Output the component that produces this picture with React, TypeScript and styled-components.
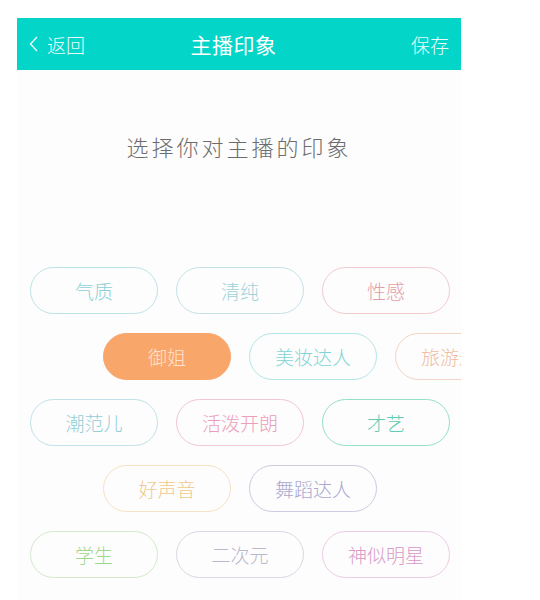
import styled, { createGlobalStyle } from 'styled-components';

type Tag = {
  label: string;
  border: string;
  color: string;
  active?: boolean;
};

const rows: { shifted: boolean; tags: Tag[] }[] = [
  {
    shifted: false,
    tags: [
      { label: '气质', border: '#bde3e6', color: '#8ccfd6' },
      { label: '清纯', border: '#c3e2e6', color: '#9fd3da' },
      { label: '性感', border: '#f1cbd0', color: '#e49dab' },
    ],
  },
  {
    shifted: true,
    tags: [
      { label: '御姐', border: '#f9a66b', color: '#fde2cc', active: true },
      { label: '美妆达人', border: '#b2e6e6', color: '#7fd5d6' },
      { label: '旅游达人', border: '#f3d3c4', color: '#efbda3' },
    ],
  },
  {
    shifted: false,
    tags: [
      { label: '潮范儿', border: '#c0e2e8', color: '#93cdd6' },
      { label: '活泼开朗', border: '#f1c6d5', color: '#eb9dba' },
      { label: '才艺', border: '#93e0ca', color: '#5fcdb0' },
    ],
  },
  {
    shifted: true,
    tags: [
      { label: '好声音', border: '#f5e3c3', color: '#efc98c' },
      { label: '舞蹈达人', border: '#cccbe0', color: '#a9a8cf' },
    ],
  },
  {
    shifted: false,
    tags: [
      { label: '学生', border: '#d2e9cb', color: '#a0d78d' },
      { label: '二次元', border: '#d9d8e3', color: '#b9b8cc' },
      { label: '神似明星', border: '#edcbe5', color: '#d899c8' },
    ],
  },
];

function App() {
  return (
    <>
      <GlobalStyle />
      <Page>
        <Header>
          <BackButton type='button'>
            <svg width='11' height='18' viewBox='0 0 11 18'>
              <path
                d='M9 2 L2.5 9 L9 16'
                fill='none'
                stroke='currentColor'
                strokeWidth='1.4'
              />
            </svg>
            返回
          </BackButton>
          <Title>主播印象</Title>
          <SaveButton type='button'>保存</SaveButton>
        </Header>
        <Prompt>选择你对主播的印象</Prompt>
        <TagList>
          {rows.map((row, i) => (
            <TagRow key={i} $shifted={row.shifted}>
              {row.tags.map((tag) => (
                <TagPill
                  key={tag.label}
                  $border={tag.border}
                  $color={tag.color}
                  $active={tag.active}
                >
                  {tag.label}
                </TagPill>
              ))}
            </TagRow>
          ))}
        </TagList>
      </Page>
    </>
  );
}

export default App;

const GlobalStyle = createGlobalStyle`
  html, body {
    margin: 0;
    padding: 0;
    background: #ffffff;
  }
  body {
    font-family: 'Noto Sans CJK SC', 'Noto Sans', sans-serif;
  }
`;

// the phone screen; the last tag of row two runs past its edge and is cut off
const Page = styled.div`
  width: 444px;
  height: 582px;
  margin: 18px 0 0 17px;
  background-color: #fdfdfd;
  overflow: hidden;
`;

const Header = styled.header`
  display: grid;
  grid-template-columns: 1fr auto 1fr;
  align-items: center;
  height: 52px;
  padding: 0 12px 0 11px;
  background-color: #03d6c9;
  color: #ffffff;
`;

const BackButton = styled.button`
  display: flex;
  align-items: center;
  column-gap: 8px;
  justify-self: start;
  padding: 0;
  background: transparent;
  border: none;
  color: #e9fbf9;
  font-family: inherit;
  font-size: 19px;
  font-weight: 300;
  cursor: pointer;
`;

const Title = styled.h1`
  margin: 0 0 0 -10px;
  font-size: 21px;
  font-weight: 400;
  letter-spacing: 0.5px;
`;

const SaveButton = styled.button`
  justify-self: end;
  padding: 0;
  background: transparent;
  border: none;
  color: #e9fbf9;
  font-family: inherit;
  font-size: 19px;
  font-weight: 300;
  cursor: pointer;
`;

const Prompt = styled.p`
  margin: 60px 0 0;
  text-align: center;
  color: #6c6c6c;
  font-size: 22px;
  font-weight: 300;
  letter-spacing: 3px;
  line-height: 32px;
`;

const TagList = styled.div`
  display: flex;
  flex-direction: column;
  row-gap: 19px;
  margin-top: 105px;
`;

const TagRow = styled.div<{ $shifted: boolean }>`
  display: flex;
  column-gap: 18px;
  padding-left: ${(p) => (p.$shifted ? '86px' : '13px')};
`;

const TagPill = styled.div<{ $border: string; $color: string; $active?: boolean }>`
  flex: 0 0 128px;
  display: flex;
  align-items: center;
  justify-content: center;
  box-sizing: border-box;
  height: 47px;
  border: 1.5px solid ${(p) => p.$border};
  border-radius: 24px;
  background-color: ${(p) => (p.$active ? p.$border : 'transparent')};
  color: ${(p) => p.$color};
  font-size: 19px;
  font-weight: 300;
  white-space: nowrap;
`;
